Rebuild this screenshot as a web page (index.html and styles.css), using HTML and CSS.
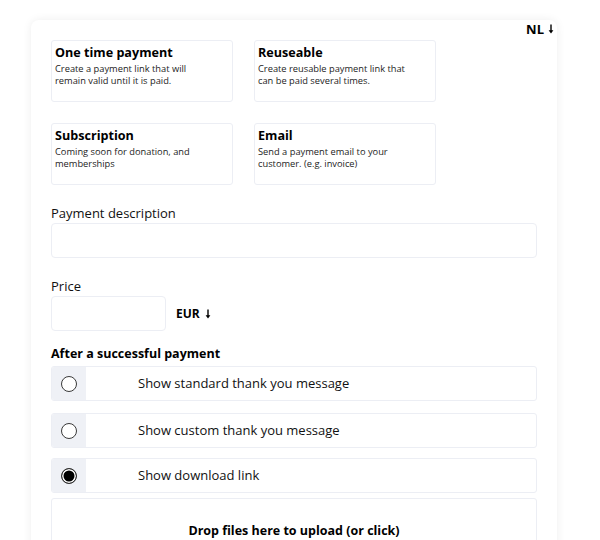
FILE: index.html
```html
<!DOCTYPE html>
<html lang="en">
<head>
<meta charset="utf-8">
<title>Create payment</title>
<link rel="stylesheet" href="styles.css">
</head>
<body>
<div class="page">
  <div class="card">
    <div class="lang">NL <svg class="arrow" width="6" height="10" viewBox="0 0 6 10"><path d="M3 0.5V7" stroke="#000" stroke-width="1.4"/><path d="M0.6 6.2H5.4L3 9.6Z" fill="#000"/></svg></div>

    <div class="types">
      <div class="type">
        <div class="type-title">One time payment</div>
        <div class="type-desc">Create a payment link that will<br>remain valid until it is paid.</div>
      </div>
      <div class="type">
        <div class="type-title">Reuseable</div>
        <div class="type-desc">Create reusable payment link that<br>can be paid several times.</div>
      </div>
      <div class="type">
        <div class="type-title">Subscription</div>
        <div class="type-desc">Coming soon for donation, and<br>memberships</div>
      </div>
      <div class="type">
        <div class="type-title">Email</div>
        <div class="type-desc">Send a payment email to your<br>customer. (e.g. invoice)</div>
      </div>
    </div>

    <div class="field">
      <div class="label">Payment description</div>
      <div class="input"></div>
    </div>

    <div class="field">
      <div class="label">Price</div>
      <div class="price-row">
        <div class="input input-price"></div>
        <div class="currency">EUR <svg class="arrow" width="6" height="10" viewBox="0 0 6 10"><path d="M3 0.5V7" stroke="#000" stroke-width="1.4"/><path d="M0.6 6.2H5.4L3 9.6Z" fill="#000"/></svg></div>
      </div>
    </div>

    <div class="heading">After a successful payment</div>

    <div class="option opt-1">
      <div class="opt-radio"><span class="radio"></span></div>
      <div class="opt-text">Show standard thank you message</div>
    </div>
    <div class="option opt-2">
      <div class="opt-radio"><span class="radio"></span></div>
      <div class="opt-text">Show custom thank you message</div>
    </div>
    <div class="option opt-3">
      <div class="opt-radio"><span class="radio checked"></span></div>
      <div class="opt-text">Show download link</div>
    </div>

    <div class="dropzone">Drop files here to upload (or click)</div>
  </div>
</div>
</body>
</html>
```

FILE: styles.css
```css
html, body {
  margin: 0;
  padding: 0;
  background: #ffffff;
  overflow: hidden;
}

body {
  font-family: "Open Sans", "Liberation Sans", sans-serif;
  color: #000;
  height: 540px;
}

.page {
  padding: 20px 0 0 31px;
}

.card {
  position: relative;
  box-sizing: border-box;
  width: 526px;
  min-height: 600px;
  padding: 20px 20px;
  background: #fff;
  border-radius: 8px;
  box-shadow: 0 0 10px rgba(0, 0, 0, 0.07);
}

.lang {
  position: absolute;
  top: 1px;
  right: 3px;
  font-size: 13px;
  font-weight: 700;
  line-height: 16px;
  display: flex;
  align-items: center;
  gap: 4px;
}

.arrow {
  display: block;
}

.types {
  display: grid;
  grid-template-columns: 182px 182px;
  column-gap: 21px;
  row-gap: 21px;
}

.type {
  box-sizing: border-box;
  height: 62px;
  padding: 4px 3px;
  border: 1px solid #eceef4;
  border-radius: 3px;
}

.type-title {
  font-size: 12.6px;
  font-weight: 700;
  line-height: 16px;
}

.type-desc {
  margin-top: 2px;
  font-size: 9.3px;
  line-height: 12px;
  color: #1c1c1c;
}

.field {
  margin-top: 20px;
}

.label {
  font-size: 13px;
  line-height: 16px;
  margin-bottom: 2px;
  color: #111;
}

.input {
  box-sizing: border-box;
  height: 35px;
  border: 1px solid #eceef4;
  border-radius: 4px;
  background: #fff;
}

.price-row {
  display: flex;
  align-items: center;
  gap: 10px;
}

.input-price {
  width: 115px;
}

.currency {
  font-size: 12px;
  font-weight: 700;
  display: flex;
  align-items: center;
  gap: 5px;
}

.heading {
  margin-top: 15px;
  font-size: 12.5px;
  font-weight: 700;
  line-height: 16px;
}

.option {
  box-sizing: border-box;
  display: flex;
  height: 35px;
  border: 1px solid #eceef4;
  border-radius: 3px;
  overflow: hidden;
}

.opt-1 { margin-top: 4px; }
.opt-2 { margin-top: 12px; }
.opt-3 { margin-top: 10px; }

.opt-radio {
  width: 34px;
  background: #eff1f6;
  display: flex;
  align-items: center;
  justify-content: center;
}

.radio {
  box-sizing: border-box;
  width: 16px;
  height: 16px;
  border: 1.3px solid #3a3a3a;
  border-radius: 50%;
  background: #fff;
}

.radio.checked {
  background: #000;
  border-color: #333;
  box-shadow: inset 0 0 0 1.5px #fff;
}

.opt-text {
  display: flex;
  align-items: center;
  padding-left: 52px;
  padding-bottom: 2px;
  font-size: 13px;
  color: #111;
}

.dropzone {
  box-sizing: border-box;
  margin-top: 5px;
  height: 90px;
  padding-top: 24px;
  border: 1px solid #eceef4;
  border-radius: 3px;
  text-align: center;
  font-size: 12.5px;
  font-weight: 700;
  line-height: 16px;
}
```
